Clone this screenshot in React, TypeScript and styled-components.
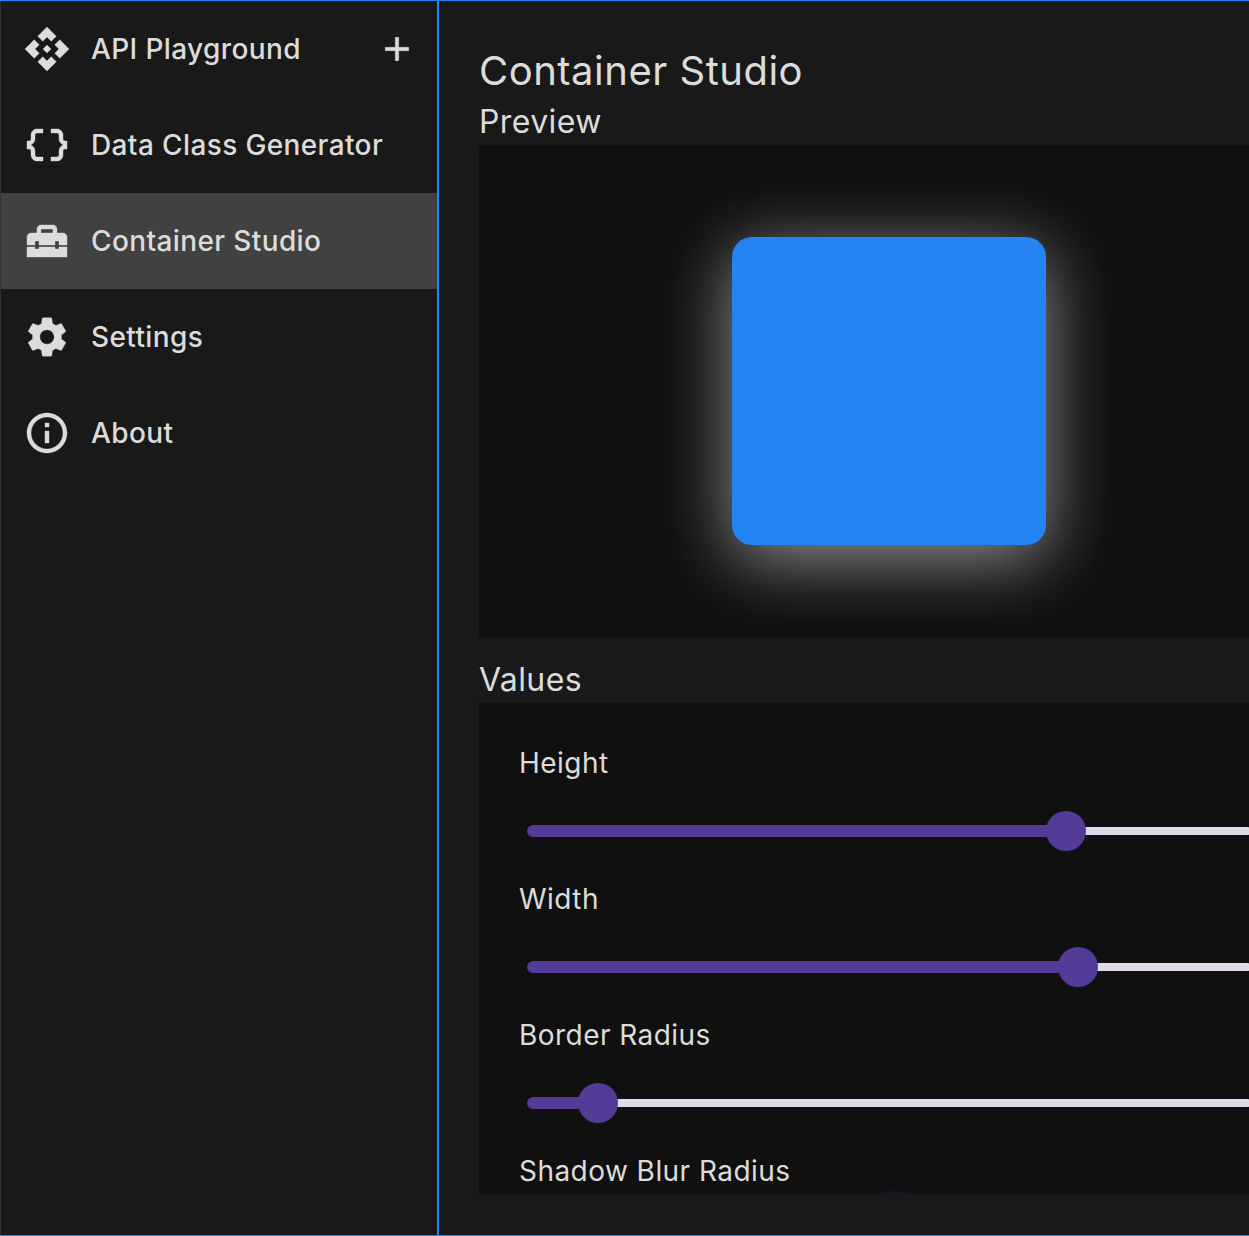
import React from "react";
import styled, { createGlobalStyle } from "styled-components";
import { MdAdd, MdApi, MdDataObject, MdHomeRepairService, MdInfoOutline, MdSettings } from "react-icons/md";

const GlobalStyle = createGlobalStyle`
  html, body {
    margin: 0;
    padding: 0;
    background: #191919;
    overflow: hidden;
  }
  * {
    box-sizing: border-box;
  }
`;

const Window = styled.div`
  display: flex;
  width: 1249px;
  height: 1236px;
  overflow: hidden;
  background: #191919;
  border-top: 1px solid #2484f3;
  border-bottom: 1px solid #2484f3;
  font-family: Inter, "Noto Sans", sans-serif;
  color: #dcdcdc;
`;

const Sidebar = styled.nav`
  flex: 0 0 439px;
  display: flex;
  flex-direction: column;
  border-left: 1px solid #333;
  border-right: 2px solid #2484f3;
`;

const NavItem = styled.div<{ $active?: boolean }>`
  height: 96px;
  flex: none;
  display: flex;
  align-items: center;
  padding-left: 22px;
  gap: 20px;
  background: ${({ $active }) => ($active ? "#414141" : "transparent")};
  font-size: 28px;
  font-weight: 500;
  letter-spacing: 0.38px;

  > svg {
    flex: none;
    width: 48px;
    height: 48px;
    stroke-width: 0.2;
  }

  svg path[fill="none"] {
    stroke: none;
  }
`;

const NavLabel = styled.span`
  flex: 1;
`;

const AddButton = styled.span`
  display: flex;
  margin-right: 20px;

  svg {
    width: 40px;
    height: 40px;
    stroke-width: 0.3;
  }
`;

const Main = styled.main`
  flex: none;
  width: 860px;
  padding: 46px 0 0 40px;
  display: flex;
  flex-direction: column;
`;

const Title = styled.h1`
  margin: 0 0 4px;
  height: 48px;
  font-size: 40px;
  line-height: 48px;
  font-weight: 400;
  letter-spacing: 0.5px;
`;

const SectionLabel = styled.h2`
  margin: 0;
  height: 46px;
  font-size: 32px;
  line-height: 46px;
  font-weight: 400;
  letter-spacing: 0.4px;
`;

const PreviewPanel = styled.section`
  height: 492px;
  width: 820px;
  margin-bottom: 20px;
  background: #101010;
  display: flex;
  align-items: center;
  justify-content: center;
`;

const PreviewBox = styled.div`
  width: 314px;
  height: 308px;
  border-radius: 20px;
  background: #2484f3;
  box-shadow: 0 14px 70px rgba(255, 255, 255, 0.55);
`;

const ValuesPanel = styled.section`
  height: 492px;
  width: 820px;
  padding: 42px 40px 0;
  background: #101010;
  overflow: hidden;
`;

const ValueRow = styled.div`
  height: 136px;
  flex: none;
`;

const ValueLabel = styled.div`
  height: 36px;
  font-size: 28px;
  line-height: 36px;
  letter-spacing: 0.45px;
`;

const Slider = styled.div`
  position: relative;
  margin: 30px 0 0 8px;
  width: 724px;
  height: 40px;
  display: flex;
  align-items: center;
`;

const SliderActive = styled.div`
  height: 12px;
  flex: none;
  background: #543b97;
  border-radius: 6px 0 0 6px;
`;

const SliderInactive = styled.div`
  height: 8px;
  flex: 1;
  background: #e1d8e9;
  border-radius: 0 4px 4px 0;
`;

const SliderThumb = styled.div`
  position: absolute;
  top: 0;
  width: 40px;
  height: 40px;
  margin-left: -20px;
  border-radius: 50%;
  background: #543b97;
`;

const SliderOverlay = styled.div`
  position: absolute;
  top: -28px;
  width: 96px;
  height: 96px;
  margin-left: -48px;
  border-radius: 50%;
  background: rgba(84, 59, 151, 0.14);
`;

const navItems = [
  { label: "API Playground", icon: <MdApi />, add: true },
  { label: "Data Class Generator", icon: <MdDataObject /> },
  { label: "Container Studio", icon: <MdHomeRepairService />, active: true },
  { label: "Settings", icon: <MdSettings /> },
  { label: "About", icon: <MdInfoOutline /> },
];

const TRACK_WIDTH = 724;

const values = [
  { label: "Height", thumb: 539 },
  { label: "Width", thumb: 551 },
  { label: "Border Radius", thumb: 71 },
  { label: "Shadow Blur Radius", thumb: 368, focused: true },
];

export default function App() {
  return (
    <>
      <GlobalStyle />
      <Window>
        <Sidebar>
          {navItems.map((item) => (
            <NavItem key={item.label} $active={item.active}>
              {item.icon}
              <NavLabel>{item.label}</NavLabel>
              {item.add && (
                <AddButton>
                  <MdAdd />
                </AddButton>
              )}
            </NavItem>
          ))}
        </Sidebar>
        <Main>
          <Title>Container Studio</Title>
          <SectionLabel>Preview</SectionLabel>
          <PreviewPanel>
            <PreviewBox />
          </PreviewPanel>
          <SectionLabel>Values</SectionLabel>
          <ValuesPanel>
            {values.map((v) => (
              <ValueRow key={v.label}>
                <ValueLabel>{v.label}</ValueLabel>
                <Slider>
                  <SliderActive style={{ width: v.thumb }} />
                  <SliderInactive style={{ width: TRACK_WIDTH - v.thumb }} />
                  {v.focused && <SliderOverlay style={{ left: v.thumb }} />}
                  <SliderThumb style={{ left: v.thumb }} />
                </Slider>
              </ValueRow>
            ))}
          </ValuesPanel>
        </Main>
      </Window>
    </>
  );
}
